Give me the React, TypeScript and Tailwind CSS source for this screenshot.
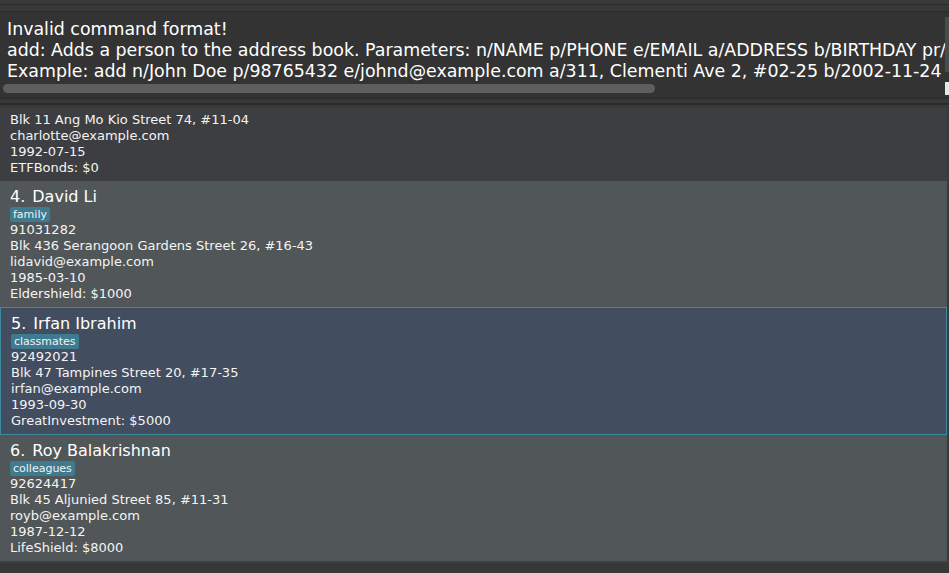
import React from "react";

type Person = {
  idx: number;
  name: string;
  tag: string;
  phone: string;
  address: string;
  email: string;
  birthday: string;
  policy: string;
};

const people: Person[] = [
  {
    idx: 3,
    name: "Charlotte Oliveiro",
    tag: "neighbours",
    phone: "93210283",
    address: "Blk 11 Ang Mo Kio Street 74, #11-04",
    email: "charlotte@example.com",
    birthday: "1992-07-15",
    policy: "ETFBonds: $0",
  },
  {
    idx: 4,
    name: "David Li",
    tag: "family",
    phone: "91031282",
    address: "Blk 436 Serangoon Gardens Street 26, #16-43",
    email: "lidavid@example.com",
    birthday: "1985-03-10",
    policy: "Eldershield: $1000",
  },
  {
    idx: 5,
    name: "Irfan Ibrahim",
    tag: "classmates",
    phone: "92492021",
    address: "Blk 47 Tampines Street 20, #17-35",
    email: "irfan@example.com",
    birthday: "1993-09-30",
    policy: "GreatInvestment: $5000",
  },
  {
    idx: 6,
    name: "Roy Balakrishnan",
    tag: "colleagues",
    phone: "92624417",
    address: "Blk 45 Aljunied Street 85, #11-31",
    email: "royb@example.com",
    birthday: "1987-12-12",
    policy: "LifeShield: $8000",
  },
];

function Card({ p, variant }: { p: Person; variant: "dark" | "grey" | "selected" }) {
  const cls =
    variant === "selected"
      ? "bg-[#424d5f] border border-[#3b8aa0]"
      : variant === "grey"
      ? "bg-[#515658]"
      : "bg-[#3c3e41]";
  return (
    <div className={`shrink-0 pl-[10px] pt-[5px] pb-[5px] ${cls}`}>
      <div className="text-[16px] leading-[21px] text-white whitespace-nowrap flex">
        <span>{p.idx}.</span>
        <span className="ml-[7px]">{p.name}</span>
      </div>
      <div className="h-[15px] flex">
        <span className="text-[11px] leading-[15px] px-[3px] rounded-[2px] bg-[#3e7b91] text-[#f2f2f2]">
          {p.tag}
        </span>
      </div>
      <div className="text-[13px] leading-[16px] text-[#f4f4f4] whitespace-nowrap">
        <div>{p.phone}</div>
        <div>{p.address}</div>
        <div>{p.email}</div>
        <div>{p.birthday}</div>
        <div>{p.policy}</div>
      </div>
    </div>
  );
}

export default function App() {
  return (
    <div className="w-[949px] h-[573px] bg-[#383838] flex flex-col overflow-hidden text-white font-['DejaVu_Sans',sans-serif]">
      <div className="h-[4px] shrink-0 bg-[#3a3a3a]" />
      <div className="h-[1px] shrink-0 bg-[#2a2a2a]" />
      <div className="h-[6px] shrink-0" />
      <div className="h-[1px] shrink-0 bg-[#2c2c2c]" />
      <div className="h-[85px] shrink-0 bg-[#333333] flex">
        <div className="flex-1 min-w-0 flex flex-col">
          <div className="pt-[7px] pl-[7px] text-[17.4px] leading-[21px] whitespace-nowrap overflow-hidden text-white">
            <div>Invalid command format!</div>
            <div>
              add: Adds a person to the address book. Parameters: n/NAME p/PHONE e/EMAIL a/ADDRESS b/BIRTHDAY pr/POLICY [t/TAG]...
            </div>
            <div>Example: add n/John Doe p/98765432 e/johnd@example.com a/311, Clementi Ave 2, #02-25 b/2002-11-24 pr/Eldershield t/friends</div>
          </div>
          <div className="mt-[2px] ml-[3px] w-[652px] h-[9px] rounded-full bg-[#5e5e5e]" />
        </div>
        <div className="w-[4px] shrink-0 flex flex-col">
          <div className="mt-[5px] h-[55px] bg-[#4b4b4b]" />
          <div className="mt-[10px] h-[13px] bg-[#e6e6e6]" />
        </div>
      </div>
      <div className="h-[2px] shrink-0 bg-[#2e2e2e]" />
      <div className="h-[4px] shrink-0" />
      <div className="h-[2px] shrink-0 bg-[#2a2a2a]" />
      <div className="h-[3px] shrink-0 bg-[#3a3a3a]" />
      <div className="flex-1 min-h-0 overflow-hidden flex flex-col justify-end pr-[2px] bg-[#3a3a3a]">
        <Card p={people[0]} variant="dark" />
        <Card p={people[1]} variant="grey" />
        <Card p={people[2]} variant="selected" />
        <Card p={people[3]} variant="grey" />
      </div>
      <div className="h-[12px] shrink-0 flex flex-col">
        <div className="h-[2px] bg-[#3e3e3e]" />
      </div>
    </div>
  );
}
